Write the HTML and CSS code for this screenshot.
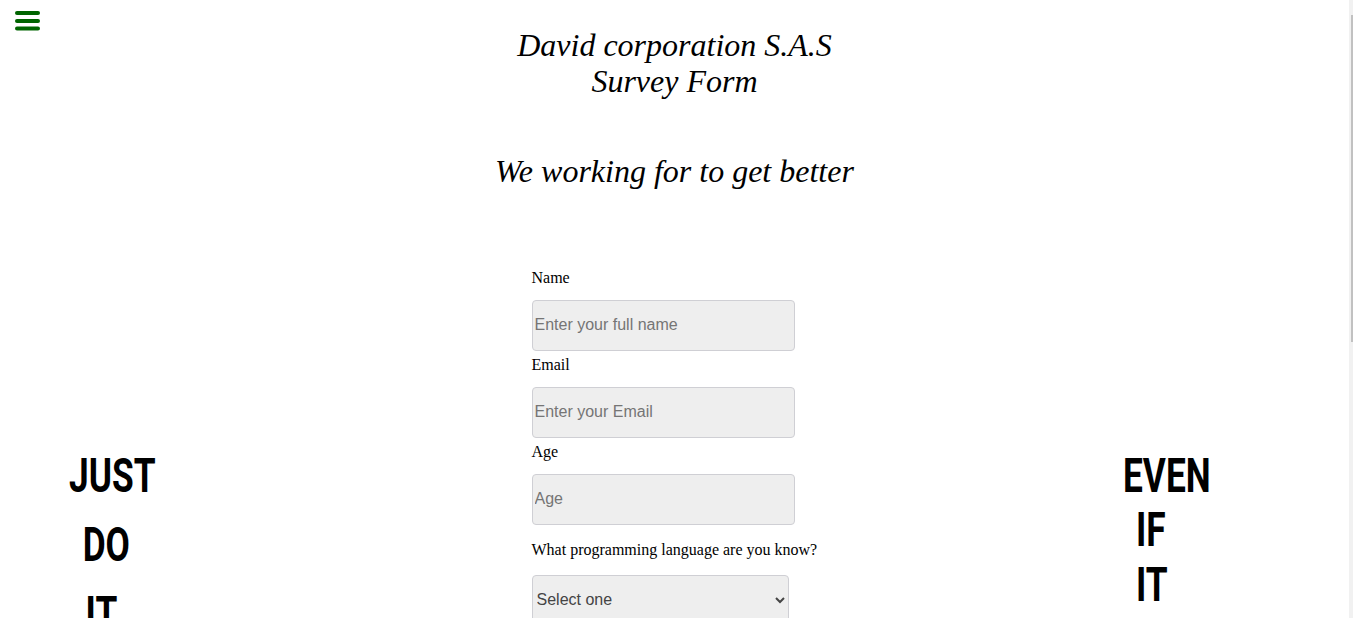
FILE: index.html
```html
<!DOCTYPE html>
<html lang="en">
<head>
<meta charset="utf-8">
<title>David corporation S.A.S Survey Form</title>
<link rel="stylesheet" href="styles.css">
</head>
<body>
<button class="menu-btn" type="button" aria-label="Menu">
  <svg width="25" height="21" viewBox="0 0 25 21" aria-hidden="true">
    <line x1="2" y1="2" x2="23" y2="2" />
    <line x1="2" y1="10" x2="23" y2="10" />
    <line x1="2" y1="17.5" x2="23" y2="17.5" />
  </svg>
</button>
<div class="fake-scrollbar" aria-hidden="true"><div class="fake-thumb"></div></div>

<div class="page">
<header class="header">
  <h1 class="title">David corporation S.A.S<br>Survey Form</h1>
  <h2 class="subtitle">We working for to get better</h2>
</header>

<main class="layout">
  <div class="slogan slogan-left">
    <div class="slogan-text">
      <div class="line">JUST</div>
      <div class="line indent">DO</div>
      <div class="line indent2">IT</div>
    </div>
  </div>

  <form class="survey">
    <label class="field-label" for="name">Name</label>
    <input class="field" id="name" type="text" placeholder="Enter your full name">
    <label class="field-label" for="email">Email</label>
    <input class="field" id="email" type="email" placeholder="Enter your Email">
    <label class="field-label" for="age">Age</label>
    <input class="field" id="age" type="number" placeholder="Age">
    <p class="question">What programming language are you know?</p>
    <select class="dropdown" id="lang">
      <option>Select one</option>
      <option>JavaScript</option>
      <option>Python</option>
      <option>Java</option>
    </select>
    <p class="question">Would you recommend us to a friend?</p>
    <div class="radios">
      <label><input type="radio" name="rec"> Definitely</label>
      <label><input type="radio" name="rec"> Maybe</label>
      <label><input type="radio" name="rec"> Not sure</label>
    </div>
    <p class="question">Any comments or suggestions?</p>
    <textarea class="comments" placeholder="Enter your comment here..."></textarea>
    <button class="submit" type="submit">Submit</button>
  </form>

  <div class="slogan slogan-right">
    <div class="slogan-text">
      <div class="line">EVEN</div>
      <div class="line indent">IF</div>
      <div class="line indent">IT</div>
    </div>
  </div>
</main>
</div>
</body>
</html>
```

FILE: styles.css
```css
html {
  background: #ffffff;
}

body {
  margin: 0;
  font-family: "Liberation Serif", "Times New Roman", serif;
  color: #000;
  background: #fff;
}

.page {
  margin-right: 4px;
}

.fake-scrollbar {
  position: fixed;
  top: 0;
  right: 0;
  width: 4px;
  height: 100%;
  background: #f1f1f1;
}
.fake-thumb {
  margin-top: 15px;
  margin-left: 2px;
  width: 2px;
  height: 327px;
  background: #c1c1c1;
}

.menu-btn {
  position: fixed;
  left: 15px;
  top: 11px;
  padding: 0;
  margin: 0;
  border: 0;
  background: transparent;
  line-height: 0;
  cursor: pointer;
}
.menu-btn svg line {
  stroke: #006400;
  stroke-width: 4;
  stroke-linecap: round;
}

.header {
  padding-top: 27px;
  text-align: center;
}

.title {
  margin: 0;
  font-size: 32px;
  line-height: 36px;
  font-style: italic;
  font-weight: normal;
}

.subtitle {
  margin: 54px 0 0;
  font-size: 32px;
  line-height: 36px;
  font-style: italic;
  font-weight: normal;
}

.layout {
  display: grid;
  grid-template-columns: 1fr 286px 1fr;
  margin-top: 79.6px;
}

.slogan-text {
  font-family: Roboto, "Liberation Sans", sans-serif;
  font-weight: 700;
  font-size: 49px;
  transform: scaleX(0.72);
  transform-origin: left top;
  width: max-content;
}

.slogan-left {
  padding-left: 69px;
  margin-top: 172.4px;
}
.slogan-left .slogan-text {
  line-height: 69px;
}
.slogan-left .indent {
  padding-left: 19px;
}
.slogan-left .indent2 {
  padding-left: 23px;
}

.slogan-right {
  padding-left: 305.5px;
  margin-top: 180px;
}
.slogan-right .slogan-text {
  line-height: 54.5px;
}
.slogan-right .indent {
  padding-left: 18px;
}

.survey {
  display: flex;
  flex-direction: column;
  align-items: flex-start;
  padding-bottom: 200px;
}

.field-label {
  display: block;
  font-size: 16px;
  line-height: 18px;
}

.field {
  box-sizing: border-box;
  width: 263px;
  height: 51px;
  margin: 13px 0 5px;
  padding: 0 2px;
  border: 1px solid #cfcfd4;
  border-radius: 4px;
  background: #eeeeee;
  font-family: "Liberation Sans", Arial, sans-serif;
  font-size: 16px;
  color: #000;
  outline: none;
}
.field::placeholder {
  color: #757575;
}
.field::-webkit-outer-spin-button,
.field::-webkit-inner-spin-button {
  -webkit-appearance: none;
  margin: 0;
}

.question {
  margin: 11px 0 0;
  font-size: 16px;
  line-height: 18px;
}

.dropdown {
  box-sizing: border-box;
  width: 257px;
  height: 50px;
  margin-top: 16.4px;
  padding: 0;
  border: 1px solid #cfcfd4;
  border-radius: 4px;
  background-color: #eeeeee;
  font-family: "Liberation Sans", Arial, sans-serif;
  font-size: 16px;
  color: #444;
}

.radios {
  display: flex;
  flex-direction: column;
  gap: 8px;
  margin-top: 14px;
  font-size: 16px;
}

.comments {
  box-sizing: border-box;
  width: 263px;
  height: 120px;
  margin-top: 14px;
  border: 1px solid #cfcfd4;
  border-radius: 4px;
  background: #eeeeee;
  font-family: "Liberation Sans", Arial, sans-serif;
  font-size: 16px;
}

.submit {
  margin-top: 20px;
  padding: 10px 30px;
  border: 0;
  border-radius: 4px;
  background: #006400;
  color: #fff;
  font-family: "Liberation Sans", Arial, sans-serif;
  font-size: 16px;
}
```
